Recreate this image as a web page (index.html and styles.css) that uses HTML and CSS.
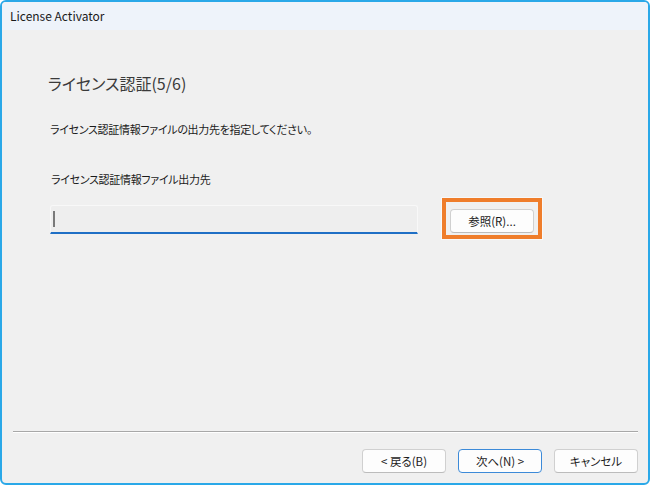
FILE: index.html
```html
<!DOCTYPE html>
<html lang="ja">
<head>
<meta charset="utf-8">
<title>License Activator</title>
<link rel="stylesheet" href="styles.css">
</head>
<body>
<div class="window">
  <div class="titlebar">License Activator</div>
  <div class="content">
    <div class="main">
      <h1 class="heading">ライセンス認証(5/6)</h1>
      <p class="desc">ライセンス認証情報ファイルの出力先を指定してください。</p>
      <p class="label">ライセンス認証情報ファイル出力先</p>
      <div class="row">
        <div class="input"><span class="caret"></span></div>
        <div class="highlight">
          <button class="btn browse">参照(R)...</button>
        </div>
      </div>
    </div>
    <div class="footer">
      <div class="separator"></div>
      <div class="buttons">
        <button class="btn">&lt; 戻る(B)</button>
        <button class="btn primary">次へ(N) &gt;</button>
        <button class="btn">キャンセル</button>
      </div>
    </div>
  </div>
</div>
</body>
</html>
```

FILE: styles.css
```css
* { box-sizing: border-box; }
html, body { margin: 0; padding: 0; background: #ffffff; }
body {
  font-family: "Noto Sans CJK JP", "Noto Sans", sans-serif;
  font-feature-settings: "palt";
  color: #1b1b1b;
}
.window {
  width: 650px;
  height: 485px;
  border: 2px solid #2aa8e8;
  border-radius: 6px;
  background: #f0f0f0;
  display: flex;
  flex-direction: column;
  overflow: hidden;
}
.titlebar {
  height: 28px;
  background: #eef3fa;
  font-size: 12px;
  line-height: 28px;
  padding-left: 8px;
  color: #1a1a1a;
}
.content {
  flex: 1;
  display: flex;
  flex-direction: column;
}
.main {
  flex: 1;
  padding-left: 46px;
}
.heading {
  margin: 42px 0 0 0;
  font-size: 16px;
  font-weight: normal;
  line-height: 22px;
  color: #3a3a3a;
}
.desc {
  margin: 27px 0 0 2px;
  font-size: 11px;
  letter-spacing: -0.3px;
  line-height: 16px;
}
.label {
  margin: 34px 0 0 3px;
  font-size: 11px;
  letter-spacing: -0.3px;
  line-height: 16px;
}
.row {
  display: flex;
  align-items: center;
  margin-top: 11px;
  margin-left: 2px;
}
.input {
  width: 368px;
  height: 29px;
  background: #eeeeee;
  border: 1px solid #f8f8f8;
  border-bottom: 2px solid #1f6fc5;
  border-radius: 3px 3px 0 0;
  display: flex;
  align-items: center;
  padding-left: 2px;
  margin-top: 2px;
}
.caret {
  width: 2px;
  height: 16px;
  background: #7a7a7a;
}
.highlight {
  margin-left: 24px;
  width: 100px;
  height: 41px;
  border: 4px solid #ef7d2b;
  outline: 1px solid #f8f8f8;
  padding: 5px 0 0 4px;
}
.btn {
  font-family: "Noto Sans CJK JP", "Noto Sans", sans-serif;
  font-feature-settings: "palt";
  font-size: 11.5px;
  color: #1b1b1b;
  background: #fdfdfd;
  border: 1px solid #d0d0d0;
  border-bottom-color: #bcbcbc;
  border-radius: 4px;
  width: 84px;
  height: 24px;
  padding: 0;
  line-height: 20px;
}
.footer {
  padding: 0 10px 10px 11px;
}
.separator {
  height: 2px;
  border-top: 1px solid #a8a8a8;
  border-bottom: 1px solid #ffffff;
}
.buttons {
  display: flex;
  justify-content: flex-end;
  gap: 12px;
  margin-top: 16px;
}
.buttons .btn {
  width: 84px;
  height: 24px;
}
.btn.primary {
  border: 1px solid #3c8ad8;
}
```
